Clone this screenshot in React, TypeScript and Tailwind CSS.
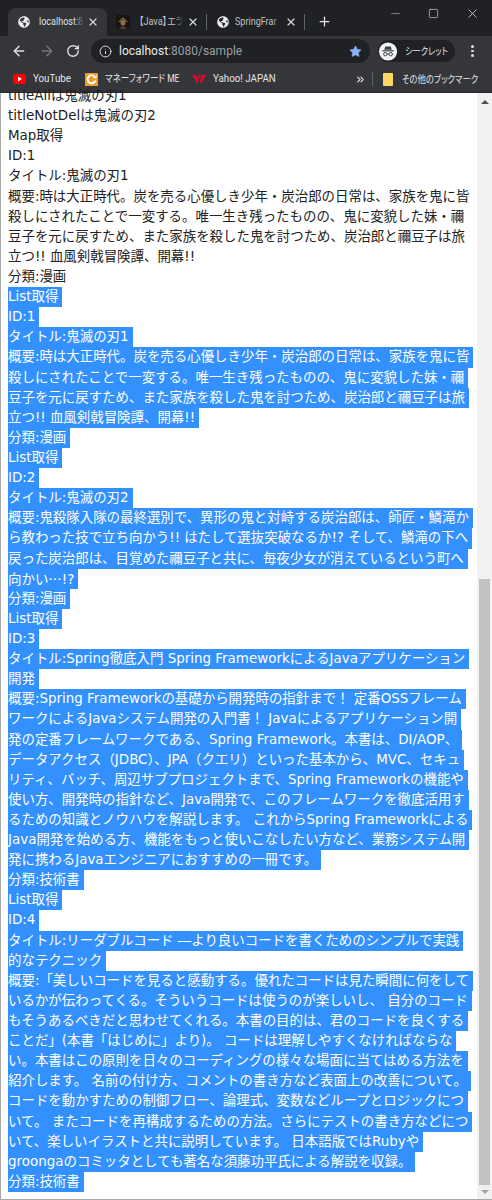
import type { ReactNode } from "react";
import { ArrowLeft, ArrowRight, RotateCw, Info, Star, Plus, X, Minus, Square, ChevronsRight } from "lucide-react";
import { FaGlobeAmericas } from "react-icons/fa";

const plain = [
  "titleAllは鬼滅の刃1",
  "titleNotDelは鬼滅の刃2",
  "Map取得",
  "ID:1",
  "タイトル:鬼滅の刃1",
  "概要:時は大正時代。炭を売る心優しき少年・炭治郎の日常は、家族を鬼に皆",
  "殺しにされたことで一変する。唯一生き残ったものの、鬼に変貌した妹・禰",
  "豆子を元に戻すため、また家族を殺した鬼を討つため、炭治郎と禰豆子は旅",
  "立つ!! 血風剣戟冒険譚、開幕!!",
  "分類:漫画",
];

const selected: ReactNode[] = [
  "List取得",
  "ID:1",
  "タイトル:鬼滅の刃1",
  "概要:時は大正時代。炭を売る心優しき少年・炭治郎の日常は、家族を鬼に皆",
  "殺しにされたことで一変する。唯一生き残ったものの、鬼に変貌した妹・禰",
  "豆子を元に戻すため、また家族を殺した鬼を討つため、炭治郎と禰豆子は旅",
  "立つ!! 血風剣戟冒険譚、開幕!!",
  "分類:漫画",
  "List取得",
  "ID:2",
  "タイトル:鬼滅の刃2",
  "概要:鬼殺隊入隊の最終選別で、異形の鬼と対峙する炭治郎は、師匠・鱗滝か",
  "ら教わった技で立ち向かう!! はたして選抜突破なるか!? そして、鱗滝の下へ",
  "戻った炭治郎は、目覚めた禰豆子と共に、毎夜少女が消えているという町へ",
  <>
    向かい<span className="font-['Noto_Sans_CJK_JP',sans-serif]">…</span>!?
  </>,
  "分類:漫画",
  "List取得",
  "ID:3",
  "タイトル:Spring徹底入門 Spring FrameworkによるJavaアプリケーション",
  "開発",
  "概要:Spring Frameworkの基礎から開発時の指針まで\uFF01 定番OSSフレーム",
  "ワークによるJavaシステム開発の入門書\uFF01 Javaによるアプリケーション開",
  "発の定番フレームワークである、Spring Framework。本書は、DI/AOP、",
  "データアクセス\uFF08JDBC\uFF09、JPA\uFF08クエリ\uFF09といった基本から、MVC、セキュ",
  "リティ、バッチ、周辺サブプロジェクトまで、Spring Frameworkの機能や",
  "使い方、開発時の指針など、Java開発で、このフレームワークを徹底活用す",
  "るための知識とノウハウを解説します。 これからSpring Frameworkによる",
  "Java開発を始める方、機能をもっと使いこなしたい方など、業務システム開",
  "発に携わるJavaエンジニアにおすすめの一冊です。",
  "分類:技術書",
  "List取得",
  "ID:4",
  "タイトル:リーダブルコード ―より良いコードを書くためのシンプルで実践",
  "的なテクニック",
  "概要:「美しいコードを見ると感動する。優れたコードは見た瞬間に何をして",
  "いるかが伝わってくる。そういうコードは使うのが楽しいし、 自分のコード",
  "もそうあるべきだと思わせてくれる。本書の目的は、君のコードを良くする",
  "ことだ」(本書「はじめに」より)。 コードは理解しやすくなければならな",
  "い。本書はこの原則を日々のコーディングの様々な場面に当てはめる方法を",
  "紹介します。 名前の付け方、コメントの書き方など表面上の改善について。",
  "コードを動かすための制御フロー、論理式、変数などループとロジックにつ",
  "いて。 またコードを再構成するための方法。さらにテストの書き方などにつ",
  "いて、楽しいイラストと共に説明しています。 日本語版ではRubyや",
  "groongaのコミッタとしても著名な須藤功平氏による解説を収録。",
  "分類:技術書",
];

function Tab({ active, width, title, icon, sep, gap = "ml-[8px]" }: { active?: boolean; width: string; title: string; icon: ReactNode; sep?: boolean; gap?: string }) {
  return (
    <div className={`relative flex h-7 shrink-0 items-center pl-[9px] pr-[8px] ${width} ${active ? "rounded-t-[8px] bg-[#35363a]" : ""}`}>
      <span className="flex w-[14px] shrink-0 justify-center">{icon}</span>
      <span className={`relative min-w-0 flex-1 whitespace-nowrap text-[10.5px] ${gap} ${active ? "text-[#dfe1e5]" : "text-[#bdc1c6]"}`}>
        <span className="block origin-left scale-x-[.86]">{title}</span>
        <span className={`absolute inset-y-0 right-0 w-[10px] bg-linear-to-r from-transparent ${active ? "to-[#35363a]" : "to-[#202124]"}`} />
      </span>
      <X size={12} strokeWidth={2.4} className="ml-[3px] shrink-0 text-[#d5d7da]" />
      {sep && <span className="absolute right-0 top-[6px] h-[16px] w-px bg-[#5f6368]" />}
    </div>
  );
}

function Incognito() {
  return (
    <svg width="19" height="19" viewBox="0 0 20 20">
      <circle cx="10" cy="10" r="10" fill="#f1f3f4" />
      <path d="M7 4.6h6l1.2 3.6H5.8z" fill="#3c4043" />
      <rect x="3.6" y="8.6" width="12.8" height="1.3" fill="#3c4043" />
      <circle cx="7" cy="13" r="1.9" fill="none" stroke="#3c4043" strokeWidth="1.1" />
      <circle cx="13" cy="13" r="1.9" fill="none" stroke="#3c4043" strokeWidth="1.1" />
      <path d="M8.8 12.8h2.4" stroke="#3c4043" strokeWidth="1" />
    </svg>
  );
}

function Bookmark({ icon, label, width, scale }: { icon: ReactNode; label: string; width: string; scale: string }) {
  return (
    <div className={`flex shrink-0 items-center ${width}`}>
      <span className="flex w-[14px] shrink-0 justify-center">{icon}</span>
      <span className={`ml-[7px] min-w-0 origin-left whitespace-nowrap text-[10.5px] text-[#e3e5e8] ${scale}`}>{label}</span>
    </div>
  );
}

export default function App() {
  return (
    <div className="flex h-[1200px] w-[492px] flex-col overflow-hidden bg-white font-['DejaVu_Sans','Noto_Sans_CJK_JP',sans-serif]">
      <header className="flex h-[93px] shrink-0 flex-col border-b border-[#26272a] font-['Roboto','Noto_Sans_CJK_JP',sans-serif] [font-feature-settings:'palt']">
        {/* tab strip */}
        <div className="flex h-9 items-end bg-[#202124] pl-[8px]">
          <Tab active width="w-[99px]" title="localhost:8" icon={<FaGlobeAmericas size={12} className="text-[#e8eaed]" />} />
          <Tab
            width="w-[100px]"
            title="【Java】エラ"
            gap="ml-[9px]"
            icon={
              <svg width="14" height="14" viewBox="0 0 14 14">
                <rect width="14" height="14" fill="#1a1512" />
                <path d="M2 7 L7 2 L12 7 Z" fill="#6b5a3a" />
                <circle cx="7" cy="8" r="2.5" fill="#8a6f4d" />
                <path d="M3 14 L7 10 L11 14 Z" fill="#4a3a2a" />
              </svg>
            }
            sep
          />
          <Tab width="w-[98px]" title="SpringFrar" gap="ml-[5px]" icon={<FaGlobeAmericas size={12} className="text-[#e8eaed]" />} sep />
          <Plus size={15} strokeWidth={2} className="mb-[7px] ml-[12px] shrink-0 text-[#e3e5e8]" />
          <div className="mb-[15px] ml-[57px] flex shrink-0 items-center gap-[26px] self-end text-[#d7d9dc]">
            <Minus size={13} strokeWidth={1.6} className="text-[#8a8c90]" />
            <Square size={11} strokeWidth={1.4} />
            <X size={15} strokeWidth={1.3} />
          </div>
        </div>
        {/* toolbar */}
        <div className="flex h-[30px] items-center bg-[#35363a] pl-[11px]">
          <ArrowLeft size={16} strokeWidth={2.2} className="text-[#dfe1e5]" />
          <ArrowRight size={16} strokeWidth={2.2} className="ml-[12px] text-[#75777a]" />
          <RotateCw size={14} strokeWidth={2.4} className="ml-[11px] text-[#dfe1e5]" />
          <div className="ml-[11px] flex h-[24px] w-[279px] shrink-0 items-center rounded-full bg-[#202124] pl-[8px] pr-[8px]">
            <Info size={13} strokeWidth={1.8} className="text-[#dfe1e5]" />
            <span className="ml-[7px] flex-1 whitespace-nowrap text-[12px] text-[#9aa0a6]">
              <span className="text-[#e8eaed]">localhost</span>:8080/sample
            </span>
            <Star size={13} strokeWidth={1} fill="#8ab4f8" className="text-[#8ab4f8]" />
          </div>
          <div className="ml-[8px] flex h-[22px] w-[77px] shrink-0 items-center rounded-full bg-[#202124] pl-[1px]">
            <Incognito />
            <span className="ml-[8px] min-w-0 origin-left scale-x-[.82] whitespace-nowrap text-[10px] text-[#e3e5e8]">シークレット</span>
          </div>
          <div className="ml-[16px] flex flex-col gap-[2px]">
            <span className="h-[2.5px] w-[2.5px] rounded-full bg-[#dfe1e5]" />
            <span className="h-[2.5px] w-[2.5px] rounded-full bg-[#dfe1e5]" />
            <span className="h-[2.5px] w-[2.5px] rounded-full bg-[#dfe1e5]" />
          </div>
        </div>
        {/* bookmarks */}
        <div className="flex flex-1 items-center bg-[#35363a] pl-[12px]">
          <Bookmark
            width="w-[72px]"
            label="YouTube"
            scale="scale-x-[.93]"
            icon={
              <svg width="13" height="10" viewBox="0 0 13 10">
                <rect width="13" height="10" rx="2.4" fill="#ff0000" />
                <path d="M5 2.6 9 5 5 7.4z" fill="#fff" />
              </svg>
            }
          />
          <Bookmark
            width="w-[108px]"
            label="マネーフォワード ME"
            scale="scale-x-[.81]"
            icon={
              <svg width="13" height="13" viewBox="0 0 13 13">
                <rect width="13" height="13" fill="#f09a26" />
                <path d="M9.6 3.6A4 4 0 1 0 10.4 7.5" fill="none" stroke="#fff" strokeWidth="2" />
                <path d="M8 5.2h3.6V2z" fill="#fff" />
              </svg>
            }
          />
          <Bookmark
            width="w-[163px]"
            label="Yahoo! JAPAN"
            scale="scale-x-[.93]"
            icon={
              <svg width="14" height="10" viewBox="0 0 14 10">
                <path d="M0 1h4l1.6 3L7.4 1h2.2L6 6v3H3.6V6z" fill="#e6002d" />
                <path d="M9.5 1H14l-4 8H8z" fill="#e6002d" />
              </svg>
            }
          />
          <ChevronsRight size={11} strokeWidth={2.4} className="shrink-0 text-[#dfe1e5]" />
          <span className="ml-[6px] h-[14px] w-px shrink-0 bg-[#5f6368]" />
          <span className="ml-[10px] h-[13px] w-[10px] shrink-0 rounded-[1px] bg-[#fdd663]" />
          <span className="ml-[9px] min-w-0 origin-left scale-x-[.83] whitespace-nowrap text-[10px] text-[#e3e5e8]">その他のブックマーク</span>
        </div>
      </header>

      <div className="flex min-h-0 flex-1 border-b border-l border-[#a8a8a8]">
        <main className="-mt-[7px] min-w-0 flex-1 overflow-hidden pl-[7px] text-[13.45px] leading-[19px]">
          {plain.map((t, i) => (
            <div key={i} className="h-[20.11px] whitespace-nowrap text-[#222]">
              {t}
            </div>
          ))}
          {selected.map((t, i) => (
            <div key={i} className="h-[20.11px] whitespace-nowrap">
              <span className="inline-block h-full bg-[#3390ff] pr-[4px] text-white">{t}</span>
            </div>
          ))}
        </main>
        <aside className="flex w-[15px] shrink-0 flex-col bg-[#f1f1f1]">
          <div className="flex h-[17px] items-center justify-center">
            <span className="h-0 w-0 border-x-[4px] border-b-[4px] border-x-transparent border-b-[#505050]" />
          </div>
          <div className="mt-[469px] h-[606px] w-[11px] self-center bg-[#c1c1c1]" />
          <div className="flex flex-1 items-center justify-center">
            <span className="h-0 w-0 border-x-[4px] border-t-[4px] border-x-transparent border-t-[#a3a3a3]" />
          </div>
        </aside>
      </div>
    </div>
  );
}
